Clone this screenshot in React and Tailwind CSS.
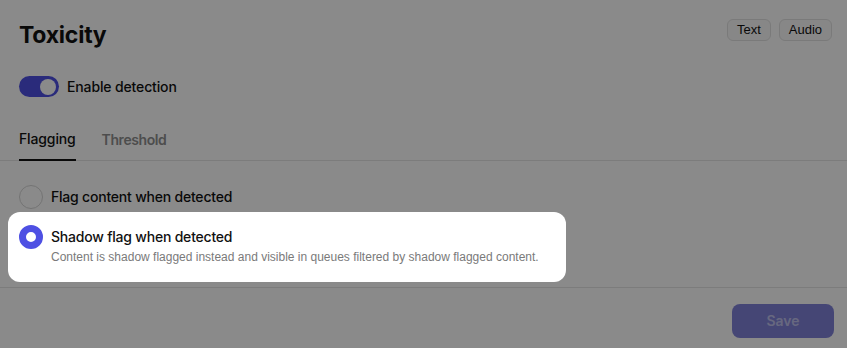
import React from "react";

const App = () => {
  return (
    <div className="relative h-[348px] w-full overflow-hidden bg-white font-['Inter',sans-serif] text-[#111]">
      <div className="flex items-start justify-between pl-[19px] pr-[15px] pt-[19px]">
        <h1 className="mt-[2px] text-[23px] font-bold leading-[28px] tracking-[-0.01em]">Toxicity</h1>
        <div className="flex gap-2">
          <span className="flex h-[22px] items-center rounded-md border border-[#e2e2e2] bg-[#fafafa] px-[9px] font-['Liberation_Sans',sans-serif] text-[13px]">
            Text
          </span>
          <span className="flex h-[22px] items-center rounded-md border border-[#e2e2e2] bg-[#fafafa] px-[9px] font-['Liberation_Sans',sans-serif] text-[13px]">
            Audio
          </span>
        </div>
      </div>

      <div className="mt-[27px] flex items-center gap-2 px-[19px]">
        <div className="flex h-[21px] w-10 items-center justify-end rounded-full bg-[#4e50e3] pr-[3px]">
          <div className="h-4 w-4 rounded-full bg-white" />
        </div>
        <span className="text-sm font-medium tracking-[-0.01em]">Enable detection</span>
      </div>

      <div className="mt-8 flex gap-[26px] border-b border-[#e5e5e5] px-[19px]">
        <button className="-mb-px border-b-2 border-[#111] pb-[10px] text-sm font-medium leading-5 tracking-[-0.01em]">
          Flagging
        </button>
        <button className="-mb-px pb-[10px] text-sm font-semibold leading-5 tracking-[-0.03em] text-[#8f8f8f]">
          Threshold
        </button>
      </div>

      <div className="mt-6 flex flex-col gap-4 px-[19px]">
        <div className="flex items-center gap-2">
          <div className="h-6 w-6 rounded-full border-[1.5px] border-[#d6d6d6]" />
          <span className="text-sm font-medium leading-5 tracking-[-0.015em]">Flag content when detected</span>
        </div>
        <div className="flex items-start gap-2">
          <div className="h-6 w-6 rounded-full border-[7px] border-[#4e50e3] bg-white" />
          <div className="mt-[2px] flex flex-col">
            <span className="text-sm font-medium leading-5 tracking-[-0.015em]">Shadow flag when detected</span>
            <span className="mt-[2px] font-['Liberation_Sans',sans-serif] text-xs leading-4 text-[#7a7a7a]">
              Content is shadow flagged instead and visible in queues filtered by shadow flagged content.
            </span>
          </div>
        </div>
      </div>

      <div className="mt-[22px] flex justify-end border-t border-[#e5e5e5] pr-[13px] pt-4">
        <button className="h-[34px] w-[102px] rounded-lg bg-[#5658cc]/75 text-sm font-semibold text-white/50">
          Save
        </button>
      </div>

      <div className="pointer-events-none absolute left-2 top-[212px] h-[70px] w-[558px] rounded-xl shadow-[0_0_0_9999px_rgba(0,0,0,0.46)]" />
    </div>
  );
};

export default App;
